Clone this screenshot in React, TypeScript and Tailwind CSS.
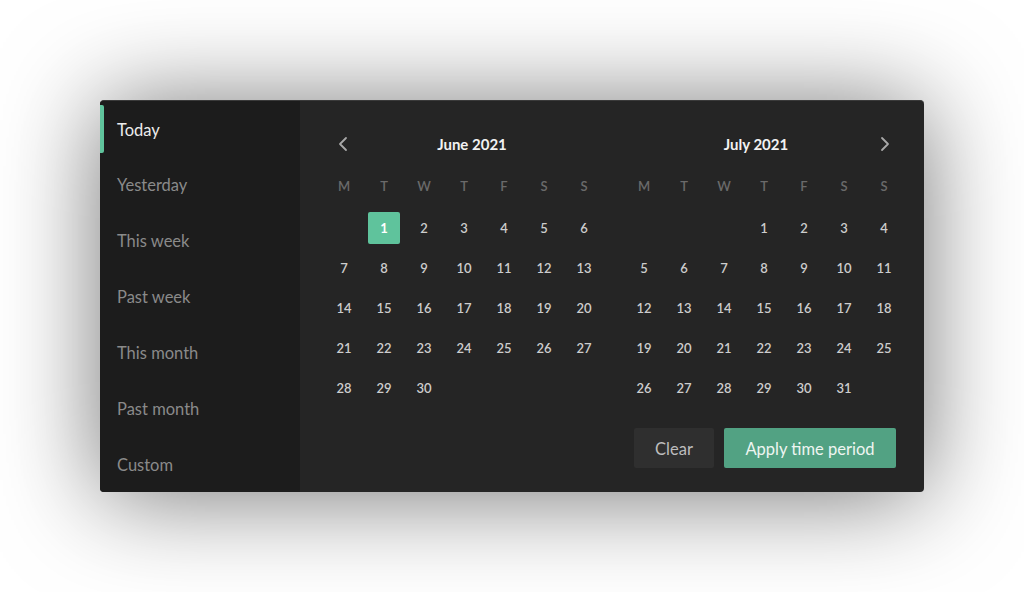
import React from "react";

const presets = ["Today", "Yesterday", "This week", "Past week", "This month", "Past month", "Custom"];
const weekdays = ["M", "T", "W", "T", "F", "S", "S"];

function Month({
  title,
  offset,
  days,
  selected,
  side,
}: {
  title: string;
  offset: number;
  days: number;
  selected?: number;
  side: "left" | "right";
}) {
  const cells: (number | null)[] = [];
  for (let i = 0; i < offset; i++) cells.push(null);
  for (let d = 1; d <= days; d++) cells.push(d);
  const chevron = (dir: "left" | "right") => (
    <svg width="10" height="16" viewBox="0 0 10 16" fill="none" className="shrink-0">
      <path
        d={dir === "left" ? "M8 2 L2 8 L8 14" : "M2 2 L8 8 L2 14"}
        stroke="#a8a8a8"
        strokeWidth="1.8"
        strokeLinecap="round"
        strokeLinejoin="round"
      />
    </svg>
  );
  return (
    <div className="w-[280px] flex flex-col">
      <div className="h-[40px] flex items-center">
        {side === "left" && <div className="ml-[14px]">{chevron("left")}</div>}
        <div
          className={`flex-1 text-center text-[15px] font-bold text-[#f2f2f2] ${
            side === "left" ? "pr-[8px]" : "pl-[8px]"
          }`}
        >
          {title}
        </div>
        {side === "right" && <div className="mr-[14px]">{chevron("right")}</div>}
      </div>
      <div className="grid grid-cols-7 h-[44px] pt-[2px] items-center">
        {weekdays.map((w, i) => (
          <div key={i} className="text-center text-[13px] font-semibold text-[#6a6a6a]">
            {w}
          </div>
        ))}
      </div>
      <div className="grid grid-cols-7">
        {cells.map((c, i) => (
          <div key={i} className="h-[40px] flex items-center justify-center">
            {c !== null &&
              (c === selected ? (
                <div className="w-[32px] h-[32px] rounded-[2px] bg-[#5fc39c] flex items-center justify-center text-[13px] font-bold text-white pt-[1px]">
                  {c}
                </div>
              ) : (
                <span className="text-[13px] font-semibold text-[#cdcdcd] pt-[2px]">{c}</span>
              ))}
          </div>
        ))}
      </div>
    </div>
  );
}

export default function App() {
  return (
    <div
      className="w-[1024px] h-[592px] bg-white pl-[100px] pt-[100px]"
      style={{ fontFamily: "Lato, 'Open Sans', sans-serif" }}
    >
      <div className="w-[824px] h-[392px] flex rounded-[4px] overflow-hidden bg-[#252525] shadow-[0_4px_100px_rgba(0,0,0,0.55)] border-t border-[#3a3a3a]">
        <div className="w-[200px] bg-[#1c1c1c] flex flex-col">
          {presets.map((p, i) => (
            <div key={p} className="relative h-[56px] flex items-center pl-[17px] pt-[2px]">
              {i === 0 && (
                <div className="absolute left-0 top-[4px] bottom-[4px] w-[4px] rounded-r-[2px] bg-[#5fc39c]" />
              )}
              <span className={`text-[16.5px] ${i === 0 ? "text-[#ececec]" : "text-[#8a8a8a]"}`}>{p}</span>
            </div>
          ))}
        </div>
        <div className="flex-1 flex flex-col pl-[24px] pr-[20px] pt-[23px]">
          <div className="flex gap-[20px]">
            <Month title="June 2021" offset={1} days={30} selected={1} side="left" />
            <Month title="July 2021" offset={3} days={31} side="right" />
          </div>
          <div className="flex justify-end gap-[10px] mt-[20px] mr-[8px]">
            <button className="w-[80px] h-[40px] rounded-[2px] bg-[#2f2f2f] text-[16.5px] text-[#bdbdbd] pt-[2px]">
              Clear
            </button>
            <button className="w-[172px] h-[40px] rounded-[2px] bg-[#52a283] text-[16.5px] text-[#eef5f1] pt-[2px]">
              Apply time period
            </button>
          </div>
        </div>
      </div>
    </div>
  );
}
